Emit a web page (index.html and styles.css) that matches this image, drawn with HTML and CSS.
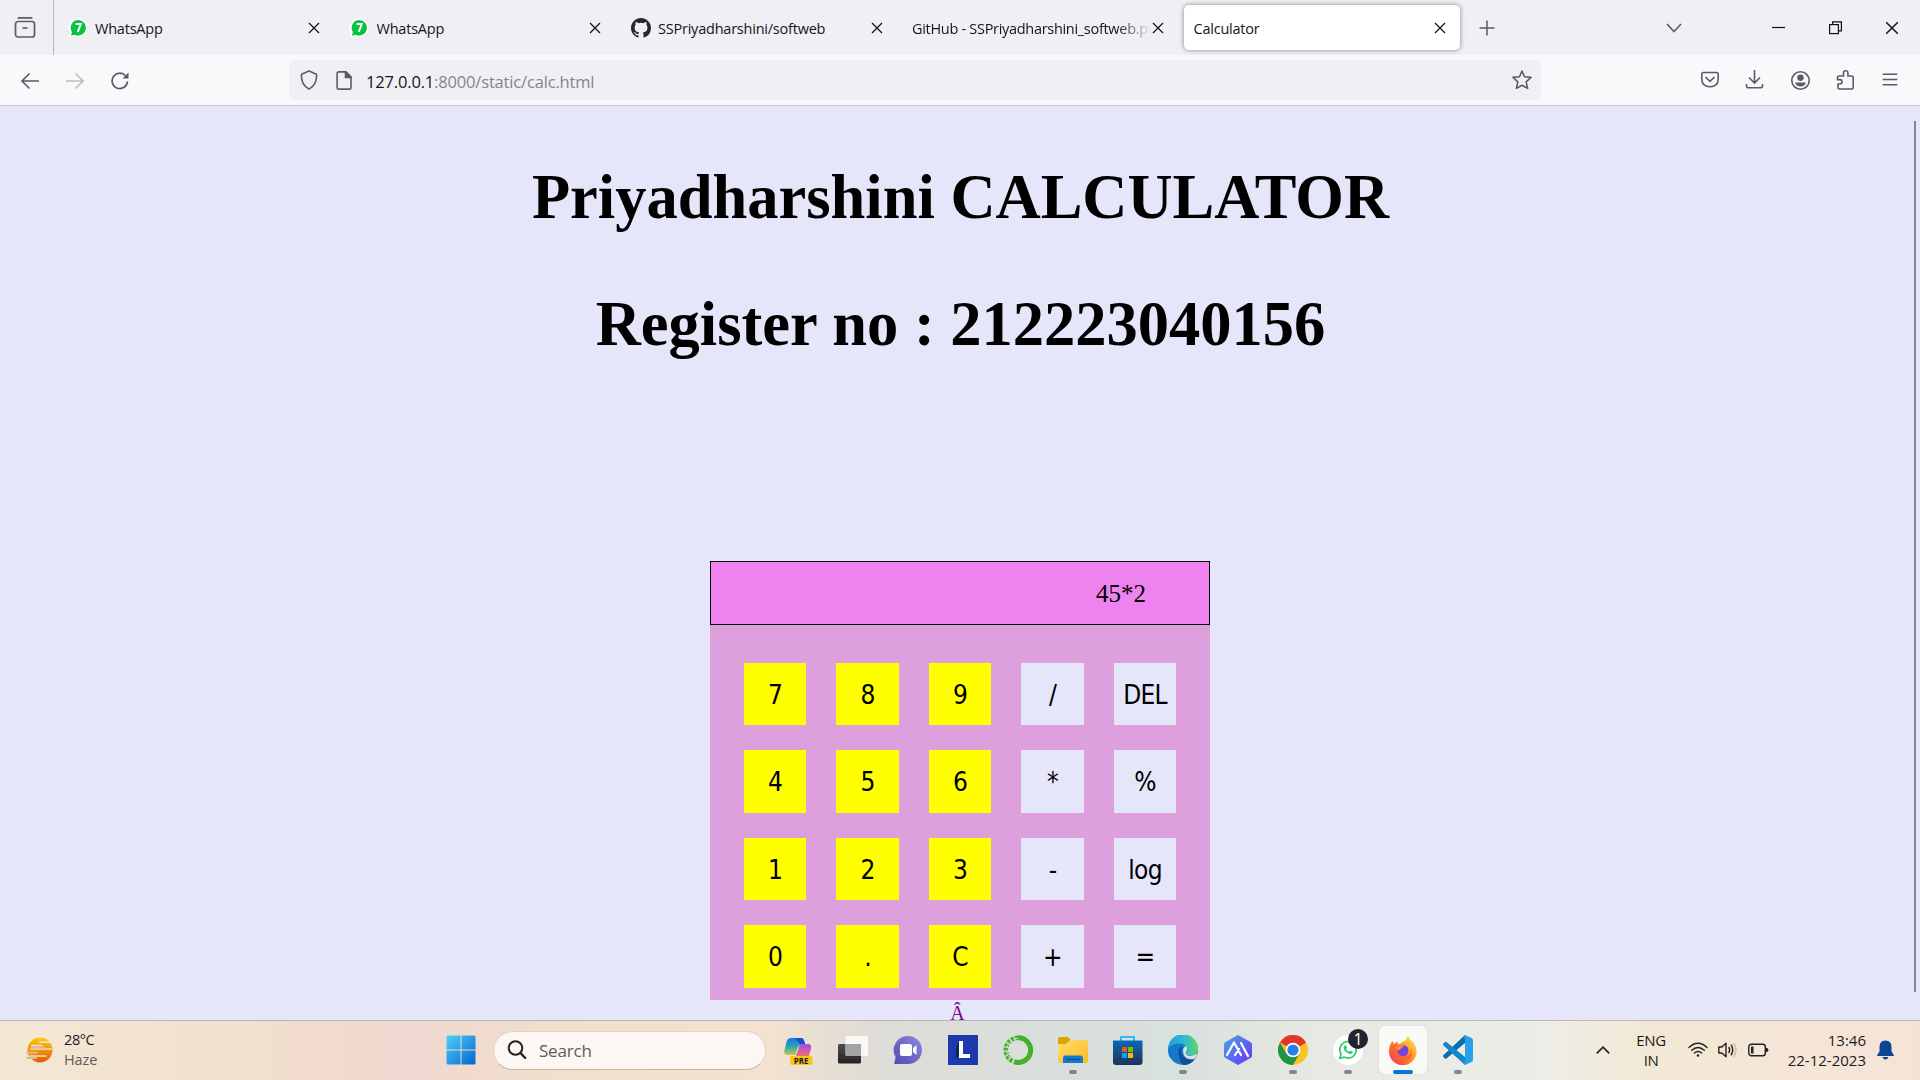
FILE: index.html
```html
<!DOCTYPE html>
<html lang="en">
<head>
<meta charset="utf-8">
<title>Calculator</title>
<link rel="stylesheet" href="styles.css">
</head>
<body>
<svg width="0" height="0" class="defs">
  <defs>
    <symbol id="x" viewBox="0 0 12 12"><path d="M1 1l10 10M11 1L1 11" fill="none" stroke="#15141a" stroke-width="1.3"/></symbol>
    <symbol id="wa" viewBox="0 0 20 20"><path d="M10 .5a9.3 9.3 0 1 1-4 17.8L1 19.3l1-4.6A9.3 9.3 0 0 1 10 .5z" fill="#fff"/><path d="M10.300 2a7.800 7.800 0 1 1-3.600 14.800L3 17.700l.9-3.700A7.800 7.800 0 0 1 10.300 2z" fill="#0bc144"/><path d="M7.600 6h5.200l-3 7.800" fill="none" stroke="#fff" stroke-width="1.900"/></symbol>
    <linearGradient id="gWin" x1="0" y1="0" x2="1" y2="1"><stop offset="0" stop-color="#4fd0fb"/><stop offset="1" stop-color="#0067cf"/></linearGradient>
    <linearGradient id="gSun" x1="0" y1="0" x2="0" y2="1"><stop offset="0" stop-color="#fccb0b"/><stop offset="1" stop-color="#e65a0c"/></linearGradient>
    <linearGradient id="gCopA" x1="0" y1="0" x2="0" y2="1"><stop offset="0" stop-color="#1b74e4"/><stop offset=".5" stop-color="#25a7b8"/><stop offset="1" stop-color="#c7cc39"/></linearGradient>
    <linearGradient id="gCopB" x1="0" y1="0" x2="0" y2="1"><stop offset="0" stop-color="#a24be8"/><stop offset="1" stop-color="#f4706b"/></linearGradient>
    <linearGradient id="gDark" x1="0" y1="0" x2="0" y2="1"><stop offset="0" stop-color="#4d4d4b"/><stop offset="1" stop-color="#222"/></linearGradient>
    <linearGradient id="gChat" x1="1" y1="0" x2="0" y2="1"><stop offset="0" stop-color="#8f8bdb"/><stop offset="1" stop-color="#5149b6"/></linearGradient>
    <linearGradient id="gFold" x1="0" y1="0" x2="1" y2="1"><stop offset="0" stop-color="#ffdd70"/><stop offset="1" stop-color="#fcbc1e"/></linearGradient>
    <linearGradient id="gStore" x1="0" y1="0" x2="0" y2="1"><stop offset="0" stop-color="#0a69b8"/><stop offset="1" stop-color="#213259"/></linearGradient>
    <linearGradient id="gEdge" x1="0" y1="0" x2="1" y2="0"><stop offset="0" stop-color="#229cdf"/><stop offset=".6" stop-color="#30bfc9"/><stop offset="1" stop-color="#63d65c"/></linearGradient>
    <linearGradient id="gHex" x1="0" y1="0" x2="1" y2="1"><stop offset="0" stop-color="#47a5ee"/><stop offset="1" stop-color="#6b34ef"/></linearGradient>
    <linearGradient id="gFox" x1="1" y1="0" x2="0" y2="1"><stop offset="0" stop-color="#fff14a"/><stop offset=".45" stop-color="#ff9629"/><stop offset="1" stop-color="#f2245e"/></linearGradient>
  </defs>
</svg>
<header class="tabs">
  <div class="view"><svg width="22" height="22" viewBox="0 0 22 22" fill="none" stroke="#5b5b66" stroke-width="1.700"><path d="M4 1.800q.3-1 1.300-1h11.400q1 0 1.300 1"/><rect x="1.500" y="4.500" width="19" height="15.500" rx="2.500"/><path d="M8.500 11h5"/></svg></div>
  <div class="tab"><svg class="fav"><use href="#wa"/></svg><span class="title">WhatsApp</span><svg class="close"><use href="#x"/></svg></div>
  <div class="tab"><svg class="fav"><use href="#wa"/></svg><span class="title">WhatsApp</span><svg class="close"><use href="#x"/></svg></div>
  <div class="tab"><svg class="fav gh" viewBox="0 0 16 16"><path fill="#24292f" d="M8 0C3.580 0 0 3.580 0 8c0 3.540 2.290 6.530 5.470 7.590.4.070.55-.17.55-.38 0-.19-.01-.82-.01-1.490-2.010.37-2.530-.49-2.690-.94-.09-.23-.48-.94-.82-1.130-.28-.15-.68-.52-.01-.53.63-.01 1.080.58 1.230.82.72 1.210 1.870.87 2.330.66.070-.52.28-.87.51-1.070-1.780-.2-3.640-.89-3.640-3.950 0-.87.31-1.590.82-2.150-.08-.2-.36-1.020.08-2.120 0 0 .67-.21 2.200.82a7.600 7.600 0 0 1 4 0c1.530-1.040 2.200-.82 2.200-.82.44 1.100.16 1.920.08 2.120.51.56.82 1.270.82 2.150 0 3.070-1.870 3.750-3.650 3.950.29.25.54.73.54 1.480 0 1.070-.01 1.930-.01 2.200 0 .21.15.46.55.38A8 8 0 0 0 16 8c0-4.420-3.580-8-8-8z"/></svg><span class="title">SSPriyadharshini/softweb</span><svg class="close"><use href="#x"/></svg></div>
  <div class="tab"><span class="title long">GitHub - SSPriyadharshini_softweb.py</span><svg class="close"><use href="#x"/></svg></div>
  <div class="tab active"><span class="title">Calculator</span><svg class="close"><use href="#x"/></svg></div>
  <svg class="plus" width="16" height="16" viewBox="0 0 16 16" stroke="#5b5b66" stroke-width="1.500"><path d="M8 .5v15M.5 8h15"/></svg>
  <div class="win">
    <svg width="16" height="10" viewBox="0 0 16 10" fill="none" stroke="#5b5b66" stroke-width="1.600"><path d="M1 1l7 7.500L15 1"/></svg>
    <svg class="min" width="13" height="14" viewBox="0 0 13 14" stroke="#111" stroke-width="1.200"><path d="M0 6.500h13"/></svg>
    <svg class="restore" width="13" height="14" viewBox="0 0 13 14" fill="none" stroke="#111" stroke-width="1.200"><rect x=".6" y="3.600" width="8.800" height="9"/><path d="M3.600 3.500V.8h8.800v9H9.600"/></svg>
    <svg class="quit" width="14" height="14"><use href="#x"/></svg>
  </div>
</header>
<nav class="toolbar">
  <div class="nav">
    <svg width="18" height="18" viewBox="0 0 18 18" fill="none" stroke="#5b5b66" stroke-width="1.600"><path d="M18 9H1M8.500 1.500L1 9l7.500 7.500"/></svg>
    <svg width="18" height="18" viewBox="0 0 18 18" fill="none" stroke="#bcbcc2" stroke-width="1.600"><path d="M0 9h17M9.500 1.500L17 9l-7.500 7.500"/></svg>
    <svg width="18" height="18" viewBox="0 0 18 18" fill="none" stroke="#5b5b66" stroke-width="1.700"><path d="M16.500 9.500A7.700 7.700 0 1 1 14.500 3.700"/><path d="M17.500.5v6h-6z" fill="#5b5b66" stroke="none"/></svg>
  </div>
  <div class="url">
    <svg class="shield" width="18" height="20" viewBox="0 0 18 20" fill="none" stroke="#5b5b66" stroke-width="1.600"><path d="M9 .9l7.500 3.300c.5 6.800-1.800 11.800-7.500 14.900C3.300 16 1 11 1.500 4.200z" stroke-linejoin="round"/></svg>
    <svg class="doc" width="16" height="19" viewBox="0 0 16 19" fill="none" stroke="#5b5b66" stroke-width="1.600"><path d="M3 .9h7l5 5v10.500q0 1.700-1.700 1.700H3q-1.900 0-1.900-1.700V2.700Q1.100.9 3 .9z"/><path d="M9.500 1v5.500H15z" fill="#5b5b66"/></svg>
    <span class="address"><b>127.0.0.1</b>:8000/static/calc.html</span>
    <svg class="star" width="20" height="20" viewBox="0 0 20 20" fill="none" stroke="#5b5b66" stroke-width="1.600" stroke-linejoin="round"><path d="M10 1l2.500 5.800 6.500.6-4.800 4.400 1.400 6.600L10 15.200l-5.600 3.200 1.400-6.600L1 7.400l6.500-.6z"/></svg>
  </div>
  <div class="tools">
    <svg width="20" height="20" viewBox="0 0 20 20" fill="none" stroke="#5b5b66" stroke-width="1.600"><path d="M3.500 2.500h13q1.700 0 1.700 1.700v4.500q0 8-8.200 8t-8.200-8V4.200q0-1.700 1.700-1.700zM5.500 7L10 11.300 14.500 7"/></svg>
    <svg width="20" height="20" viewBox="0 0 20 20" fill="none" stroke="#5b5b66" stroke-width="1.600"><path d="M9.500 0v13M4 7.500l5.500 5.500L15 7.500M1.500 14v1.800q0 2 2 2h12q2 0 2-2V14"/></svg>
    <svg width="20" height="20" viewBox="0 0 20 20"><circle cx="10.500" cy="10.500" r="8.700" fill="none" stroke="#5b5b66" stroke-width="1.600"/><circle cx="10.500" cy="7.700" r="3.200" fill="#5b5b66"/><path d="M5 12.500h11q-1.300 4-5.500 4t-5.500-4z" fill="#5b5b66"/></svg>
    <svg width="20" height="20" viewBox="0 0 20 20" fill="none" stroke="#5b5b66" stroke-width="1.600"><path d="M8.500 6V3a2.200 2.200 0 0 1 4.400 0v3h3.800q1.500 0 1.500 1.500v10q0 1.500-1.500 1.500H4.500Q3 19 3 17.500V14h1.800a2.200 2.200 0 0 0 0-4.400H2.500V7.500Q2.500 6 4 6z"/></svg>
    <svg width="20" height="20" viewBox="0 0 20 20" stroke="#5b5b66" stroke-width="1.500"><path d="M2.700 4.200h14.600M2.700 9.500h14.600M2.700 14.700h14.600"/></svg>
  </div>
</nav>
<main class="page">
  <h1>Priyadharshini CALCULATOR</h1>
  <h1>Register no : 212223040156</h1>
  <section class="calc">
    <div class="display">45*2</div>
    <div class="keys">
      <button class="num">7</button><button class="num">8</button><button class="num">9</button><button>/</button><button>DEL</button>
      <button class="num">4</button><button class="num">5</button><button class="num">6</button><button>*</button><button>%</button>
      <button class="num">1</button><button class="num">2</button><button class="num">3</button><button>-</button><button>log</button>
      <button class="num">0</button><button class="num">.</button><button class="num">C</button><button>+</button><button>=</button>
    </div>
  </section>
  <footer class="foot">Â</footer>
  <div class="thumb"></div>
</main>
<footer class="taskbar">
  <div class="weather">
    <svg width="28" height="28" viewBox="0 0 28 28"><circle cx="14" cy="14" r="12.500" fill="url(#gSun)"/><g fill="none" stroke="#f3e2c6" stroke-width="1.700" stroke-linecap="round"><path d="M14 6.200h13M6 9.700h10M5 13h20M4 20h16"/></g><g stroke="#d9bc87" stroke-width="2" stroke-linecap="round"><path d="M1 16.800h10M1 22h9M6 11.500h12"/></g></svg>
    <div class="lines"><span>28°C</span><span class="dim">Haze</span></div>
  </div>
  <div class="apps">
    <div class="app"><svg width="30" height="30" viewBox="0 0 30 30" fill="url(#gWin)"><path d="M.5 2q0-1.500 1.500-1.500h12.500v14H.5zM15.500.5H28q1.500 0 1.500 1.500v12.500h-14zM.5 15.500h14v14H2Q.5 29.500.5 28zM15.500 15.500h14V28q0 1.500-1.500 1.500H15.500z"/></svg></div>
    <div class="search"><svg width="20" height="20" viewBox="0 0 20 20" fill="none" stroke="#222" stroke-width="2"><circle cx="8.500" cy="8" r="6.800"/><path d="M13.500 13l4.700 5" stroke-width="2.400" stroke-linecap="round"/></svg><span>Search</span></div>
    <div class="app"><svg width="30" height="30" viewBox="0 0 30 30"><path d="M8 3h10q2.500 0 3.500 4l1 3h-4q-3 0-4 3l-2 7H5q-5 0-3.500-5l2-8Q4.500 3 8 3z" fill="url(#gCopA)"/><path d="M12 3h6q2.500 0 3.500 4l.8 2.500h-5Z" fill="#1a50c8"/><path d="M18 9h7q4 0 3 4.500L26 21H13l3-9q.7-3 2-3z" fill="url(#gCopB)"/><rect x="7" y="21" width="22.500" height="9" rx="2" fill="#f9c816"/><text x="18.200" y="28.500" text-anchor="middle" font-size="8" font-weight="700" class="tag">PRE</text></svg></div>
    <div class="app"><svg width="30" height="30" viewBox="0 0 30 30"><rect x="0" y="9" width="23" height="19.500" rx="1.500" fill="url(#gDark)"/><rect x="7.500" y="1" width="22.500" height="20" rx="1.500" fill="#fff" fill-opacity=".78"/><path d="M7.500 9H23v12H9q-1.500 0-1.500-1.500z" fill="#a4a4a2"/></svg></div>
    <div class="app"><svg width="30" height="30" viewBox="0 0 30 30"><path d="M15 1a14 14 0 1 1 0 28H2q-1.300 0-.6-1.300L2.600 22A14 14 0 0 1 15 1z" fill="url(#gChat)"/><rect x="7" y="9" width="12" height="12" rx="2" fill="#fff"/><path d="M20 13l3.500-3v10L20 17z" fill="#fff"/></svg></div>
    <div class="app"><svg width="30" height="30" viewBox="0 0 30 30"><path fill="#1c3aae" d="M0 0h30v30H0z"/><path d="M11 6v14l-3 4V13z" fill="#082b50"/><path d="M11 6h4v13h7v4H11z" fill="#fff"/></svg></div>
    <div class="app"><svg width="30" height="30" viewBox="0 0 30 30" fill="none" stroke="#43b02a"><path d="M15 2.800a12.300 12.300 0 1 1-4 23.800" stroke-width="5"/><path d="M15 2.800A12.300 12.300 0 0 0 10 26.300" stroke-width="4.500" stroke-dasharray="3 1.200"/><path d="M15 3.500A11.500 11.500 0 0 0 8 24" stroke="#dce0dc" stroke-width="1" stroke-dasharray="4 2"/></svg></div>
    <div class="app run"><svg width="30" height="30" viewBox="0 0 30 30"><path d="M0 4q0-2 2-2h8l3 3v8H0z" fill="#e2a106"/><path d="M0 9h8l4-4h16.500Q30 5 30 6.500v20q0 1.500-1.500 1.500h-27Q0 28 0 26.500z" fill="url(#gFold)"/><path d="M5 28v-5q0-2.500 2.500-2.500h15Q25 20.500 25 23v5z" fill="#137ad0"/><path d="M8.500 24.500h13" stroke="#0a4b94" stroke-width="1.300"/></svg></div>
    <div class="app"><svg width="30" height="30" viewBox="0 0 30 30"><path d="M8 6V2h13v4" fill="none" stroke="#31bdf1" stroke-width="2"/><path d="M0 5.500h29.500V27q0 3-3 3H3q-3 0-3-3z" fill="url(#gStore)"/><path fill="#f25022" d="M9 12h5v5H9z"/><path fill="#7fba00" d="M15 12h5v5h-5z"/><path fill="#00a4ef" d="M9 18h5v5H9z"/><path fill="#ffb900" d="M15 18h5v5h-5z"/></svg></div>
    <div class="app run"><svg width="30" height="30" viewBox="0 0 30 30"><circle cx="15" cy="15" r="15" fill="#1479c9"/><path d="M0 14A15 15 0 0 1 30 14q0 6-6.500 6.500-6 .3-5.500-2.500 2-1.500 1-4.500Q17 8 10 8.500 3 9 0 14z" fill="url(#gEdge)"/><path d="M10.500 16q0-4 4.500-5-3 3-1 8.500 2.500 6 12.500 5-5 6-11 5.500-5-4-5-14z" fill="#10529a"/><path d="M15 15.500q0-3.500 3-4.500 2 3 0 6-1 2 1.500 3.500 4 1.500 10-2-1 4-3.500 5.500-11 1.500-11-8.500z" fill="#dce1dd"/></svg></div>
    <div class="app"><svg width="30" height="30" viewBox="0 0 30 30"><path d="M15 0l12.500 7q1.500.8 1.500 2.500v11q0 1.700-1.500 2.500L15 30 2.500 23Q1 22.200 1 20.500v-11Q1 7.800 2.500 7z" fill="url(#gHex)"/><path d="M4 20l7-12.500L18 20M12 20l4-6M18 8l7 13" fill="none" stroke="#fff" stroke-width="2.200" stroke-linecap="round" stroke-linejoin="round"/></svg></div>
    <div class="app run"><svg width="30" height="30" viewBox="0 0 30 30"><circle cx="15" cy="15" r="15" fill="#fcc31e"/><path d="M15 15L28 7.500A15 15 0 0 0 2 7.500z" fill="#e0362c"/><path d="M2 7.500A15 15 0 0 0 15 30l6.500-11.300-13 0z" fill="#1e9548"/><path d="M8.500 7.500H28L15 15z" fill="#e0362c"/><circle cx="15" cy="15" r="7.300" fill="#fff"/><circle cx="15" cy="15" r="5.600" fill="#2b7cec"/></svg></div>
    <div class="app run"><svg width="30" height="30" viewBox="0 0 30 30"><circle cx="15" cy="15" r="15" fill="#fff"/><path d="M15 6.500a8.300 8.300 0 1 1-4 15.600L6.800 23.300 8 19A8.300 8.300 0 0 1 15 6.500z" fill="none" stroke="#2bcf63" stroke-width="1.700"/><path d="M11.800 10.500q.8-.7 1.400.2l.9 2-1 1.300q1 2 3 2.800l1.300-1.300 2.100 1q.8.700-.2 1.800-1.500 1.500-4.300 0-4-2-4.300-5.600-.1-1.200 1.100-2.200z" fill="#2bcf63"/></svg><span class="badge">1</span></div>
    <div class="app run current"><svg width="30" height="30" viewBox="0 0 30 30"><path d="M18 5q1-3 2-4 1 3 4 5.500 4.500 4 4.500 10A13.700 13.700 0 0 1 1 16.500Q1 10 4.500 6L6 9l3-2.500q1 1 1.300 3z" fill="url(#gFox)"/><path d="M4 11q3-3 7-1l4 2-4 3q2 6 8 5 4-1 4-6 4 12-8 13Q2 25 4 11z" fill="#fb5b34" opacity=".7"/><circle cx="15" cy="15.500" r="5.500" fill="#7542db"/><path d="M7 12q4-3 10-1-4 1-5 4-3 1-5-3z" fill="#ff9027"/></svg></div>
    <div class="app run"><svg width="30" height="30" viewBox="0 0 30 30"><path d="M22 0v8L3.500 23.500q-1 .7-2-.2L.5 22q-1-1 0-2z" fill="#0b6cb2"/><path d="M22 30v-8L3.500 7q-1-.7-2 .2L.5 8.500q-1 1 0 2z" fill="#1484cb"/><path d="M22 0l6.500 3Q30 3.700 30 5.300v19.400q0 1.600-1.500 2.300L22 30l-1.500-1.500Q22 28 22 26V4q0-2-1.500-2.500z" fill="#28a0ec"/></svg></div>
  </div>
  <div class="tray">
    <svg class="up" width="14" height="8" viewBox="0 0 14 8" fill="none" stroke="#222" stroke-width="1.700"><path d="M.8 7.300L7 1.200l6.200 6.100"/></svg>
    <div class="lines lang"><span>ENG</span><span>IN</span></div>
    <svg class="wifi" width="20" height="16" viewBox="0 0 20 16" fill="none" stroke="#222" stroke-width="1.400" stroke-linecap="round"><path d="M1 5.500q9-8.500 18 0M3.700 8.300q6.300-5.800 12.600 0M6.400 11q3.600-3.200 7.200 0"/><circle cx="10" cy="13.500" r="1.300" fill="#222" stroke="none"/></svg>
    <svg class="vol" width="20" height="18" viewBox="0 0 20 18" fill="none" stroke="#222" stroke-width="1.400"><path d="M.8 6h3L8 2.200v13.600L3.800 12h-3z" stroke-linejoin="round"/><path d="M10.700 6q2 3 0 6M13 3.700q3.500 5.300 0 10.600"/><path d="M15.500 2q5 7 0 14" stroke="#c5bfb2"/></svg>
    <svg class="bat" width="21" height="14" viewBox="0 0 21 14"><rect x=".8" y="1.300" width="16.500" height="11.500" rx="2.500" fill="none" stroke="#222" stroke-width="1.400"/><rect x="3" y="3.500" width="2.500" height="7" fill="#222"/><path d="M18 4.800q2.500.2 2.500 2.200T18 9.200z" fill="#222"/></svg>
    <div class="lines clock"><span>13:46</span><span>22-12-2023</span></div>
    <svg class="bell" width="17" height="20" viewBox="0 0 17 20" fill="#0a4695"><path d="M8.500.5q6 0 6 6.500v4.500l2.300 3.500v1H.2v-1l2.300-3.500V7q0-6.500 6-6.500zM5.500 17h6q-1 2.500-3 2.500t-3-2.500z"/></svg>
  </div>
</footer>
</body>
</html>
```
FILE: styles.css
```css
* { box-sizing: border-box; }
body { margin: 0; width: 1920px; height: 1080px; overflow: hidden; display: flex; flex-direction: column; background: #e6e6fa; font-family: "Open Sans", "Noto Sans", sans-serif; font-size: 15px; color: #15141a; }
svg { display: block; flex: none; }
.defs { position: absolute; }

.tabs { height: 55px; flex: none; display: flex; align-items: center; background: #f0f0f4; }
.view { width: 54px; height: 55px; border-right: 1px solid #b8b8be; display: flex; align-items: center; padding-left: 14px; margin-right: 1px; }
.tab { width: 276.500px; margin: 0 2.500px; height: 45px; display: flex; align-items: center; padding: 0 14.500px 0 10px; border-radius: 5px; }
.tab.active { background: #fff; box-shadow: 0 0 5px rgba(0, 0, 0, .45); }
.fav { width: 20px; height: 20px; margin-right: 7.500px; }
.title { flex: 1; min-width: 0; white-space: nowrap; overflow: hidden; font-size: 14.500px; letter-spacing: -.22px; line-height: 24px; margin-top: 2px; }
.long { letter-spacing: -.3px; margin-right: -2px; -webkit-mask-image: linear-gradient(90deg, #000 205px, transparent 240px); mask-image: linear-gradient(90deg, #000 205px, transparent 240px); }
.close { width: 12px; height: 12px; }
.plus { margin-left: 16px; }
.win { margin-left: auto; display: flex; align-items: center; padding-right: 21px; }
.min { margin-left: 90px; }
.restore { margin-left: 44px; }
.quit { margin-left: 43px; }

.toolbar { height: 51px; flex: none; display: flex; align-items: center; background: #f9f9fb; border-bottom: 1px solid #c8c8cf; }
.nav { width: 289px; display: flex; gap: 27px; padding-left: 21px; padding-top: 1px; }
.url { width: 1252px; height: 40px; border-radius: 5px; background: #f0f0f4; display: flex; align-items: center; padding: 0 9px 0 11px; }
.doc { margin-left: 18px; }
.address { margin-left: 14px; font-size: 16.500px; letter-spacing: -.17px; color: #85858c; flex: 1; padding-top: 2px; }
.address b { font-weight: 400; color: #15141a; }
.tools { margin-left: auto; display: flex; gap: 25px; padding-right: 20px; }

.page { height: 914px; flex: none; position: relative; overflow: hidden; display: flex; flex-direction: column; align-items: center; padding-top: 55px; font-family: "Liberation Serif", serif; }
h1 { margin: 0 0 55px 1px; font-size: 62.500px; line-height: 72px; font-weight: 700; color: #000; white-space: nowrap; }
.calc { width: 500px; height: 439px; margin-top: 146px; flex: none; background: #dda0dd; }
.display { height: 64px; border: 1px solid #000; background: #ee82ee; color: #000; font-size: 25px; line-height: 64px; text-align: right; padding-right: 63px; }
.keys { display: grid; grid-template-columns: repeat(5, 62.500px); grid-auto-rows: 62.500px; gap: 25px 30px; padding: 37.500px 0 0 33.750px; }
.keys button { border: 0; padding: 2px 0 0; background: #e6e6fa; color: #000; font: 26px "DejaVu Sans Condensed", "DejaVu Sans", sans-serif; font-stretch: condensed; letter-spacing: -.7px; }
.keys .num { background: #ff0; }
.foot { color: purple; font-size: 20px; line-height: 23px; margin: 2px 5px 0 0; }
.thumb { position: absolute; right: 4px; top: 15px; width: 2px; height: 871px; background: #85858d; }

.taskbar { height: 60px; flex: none; display: flex; align-items: center; justify-content: space-between; padding-bottom: 1px; border-top: 1px solid #bdb5b0; background: linear-gradient(90deg, #f4e8d5 0, #f2decd 280px, #efd8d0 400px, #f2e0cc 590px, #f3e2d0 770px, #dfdcd6 870px, #d9dfdc 1050px, #d9e1dc 1180px, #e8e9e4 1330px, #ededE8 1540px, #f3e8d6 1650px, #f4e6d6 1760px, #f6e3d7 1920px); }
.weather { width: 433px; display: flex; align-items: center; padding-left: 26px; gap: 10px; }
.lines { display: flex; flex-direction: column; line-height: 20px; font-size: 14.500px; letter-spacing: -.4px; color: #1c1c1c; }
.dim { color: #5f5b57; letter-spacing: -.1px; }
.apps { display: flex; align-items: center; flex: 1; }
.app { width: 55px; height: 48px; display: flex; align-items: center; justify-content: center; position: relative; flex: none; }
.run::after { content: ""; position: absolute; bottom: 0; left: 23.500px; width: 8px; height: 4px; border-radius: 2px; background: #858585; }
.current { width: 48px; margin: 0 3.500px; border-radius: 5px; background: #f9f9f6; box-shadow: 0 0 1px #aaa; }
.current::after { left: 14px; width: 20px; background: #0078d4; }
.search { width: 273px; height: 39px; margin: 0 4px 0 5px; border-radius: 20px; background: #fcf7f2; border: 1px solid #e5d3c2; border-bottom-color: #c5b3a5; display: flex; align-items: center; padding-left: 13px; gap: 12px; color: #5e5c5a; font-size: 17px; letter-spacing: -.2px; }
.tag { font-family: "Open Sans", sans-serif; fill: #171717; }
.badge { position: absolute; left: 28px; top: 3px; width: 20px; height: 20px; border-radius: 50%; background: #23232e; color: #fff; font-size: 16px; line-height: 20px; text-align: center; }
.tray { width: 324px; display: flex; align-items: center; flex: none; }
.lang { width: 40px; text-align: center; margin-left: 21px; font-size: 15px; }
.wifi { margin-left: 17px; }
.vol { margin-left: 10px; }
.bat { margin-left: 10px; }
.clock { width: 90px; margin-left: 7px; text-align: right; font-size: 15px; letter-spacing: 0; }
.bell { margin-left: 11px; }
```
